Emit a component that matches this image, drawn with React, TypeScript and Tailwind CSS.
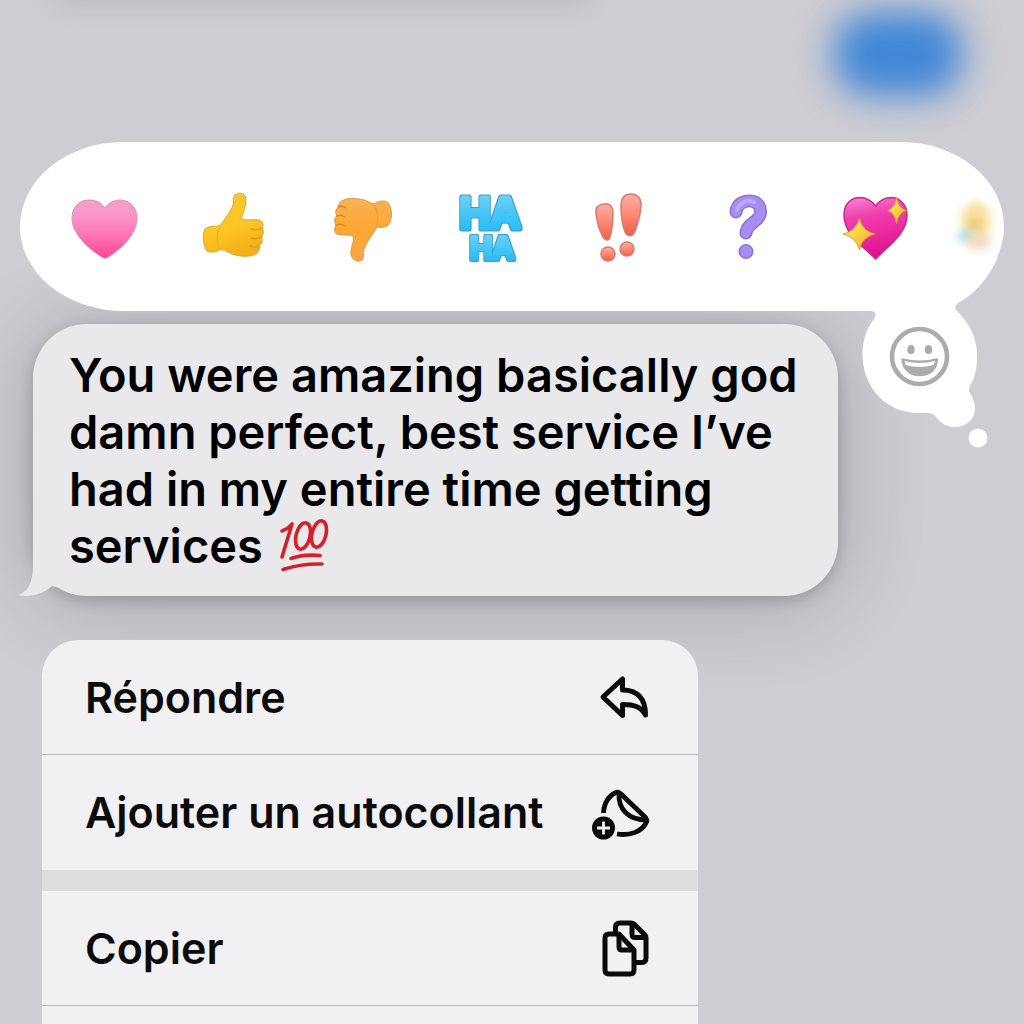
import { ReactNode } from "react";

function PinkHeart() {
  return (
    <svg viewBox="0 0 72 72" className="size-full" aria-hidden="true">
      <defs>
        <linearGradient id="pink" x1="0" y1="0" x2="0" y2="1">
          <stop offset="0" stopColor="#f3a0cb" />
          <stop offset="0.300" stopColor="#fc93c6" />
          <stop offset="0.600" stopColor="#fd76b4" />
          <stop offset="1" stopColor="#fb4496" />
        </linearGradient>
      </defs>
      <path
        d="M37 17C33 11 27 9 21 9C10 9 4 17 4 27C4 45 24 60 34.500 66.500Q37 68 39.500 66.500C50 60 69 45 69 27C69 17 62 9 52 9C46 9 40 12 37 17Z"
        fill="url(#pink)"
        stroke="#dd8fb8"
        strokeWidth="1"
      />
    </svg>
  );
}

function ThumbUp() {
  return (
    <svg viewBox="0 0 72 72" className="size-full" aria-hidden="true">
      <defs>
        <linearGradient id="thumbUp" x1="0" y1="0" x2="0.300" y2="1">
          <stop offset="0" stopColor="#fcc52f" />
          <stop offset="0.600" stopColor="#fec724" />
          <stop offset="1" stopColor="#f5b01a" />
        </linearGradient>
      </defs>
      <path
        d="M38 4C41 1 46 2 48 5C50 10 48 18 44 28C50 30 56 28 62 29C66 30 67 34 65 37C67 40 67 43 64.500 46C66 49 65 53 62.500 54.500C63 58 62 61 59 63C53 66 46 65.500 40 64.500C34 63.500 29 59 23.500 58.500C20 61 14 62 10 60C6 55 5 44 8 38C10 35 17 36 23 34.500C28 28 34 20 36 14C37 10 35 7 38 4Z"
        fill="url(#thumbUp)"
        stroke="#dfa52e"
        strokeWidth="1"
      />
      <g fill="none" stroke="#e0a01c" strokeWidth="1.500" strokeLinecap="round">
        <path d="M65 37Q60 40 54 38" />
        <path d="M64 46Q59 49 54 47" />
        <path d="M62 54.500Q58 57 53 55" />
        <path d="M23 36C19 43 19 52 23 58" stroke="#f0b322" />
      </g>
    </svg>
  );
}

function ThumbDown() {
  return (
    <svg viewBox="0 0 72 72" className="size-full" aria-hidden="true">
      <defs>
        <linearGradient id="thumbDown" x1="0" y1="0" x2="0" y2="1">
          <stop offset="0" stopColor="#f7b355" />
          <stop offset="0.500" stopColor="#ffa733" />
          <stop offset="1" stopColor="#f9a545" />
        </linearGradient>
      </defs>
      <path
        d="M48 13C42 10 38 8 33 8C28 7 23 7 19 9C15 10 13 13 14 16C10 18 10 22 12 25C9 27 9 31 11 34C9 37 9 42 12 43C17 45 23 43 28 45C30 50 25 57 26 64C27 69 34 72 37 69C40 66 37 63 39 58C42 50 48 43 52 36C57 37 62 36 64 33C68 26 67 15 62 11C57 8 52 12 48 13Z"
        fill="url(#thumbDown)"
        stroke="#d89a48"
        strokeWidth="1"
      />
      <g fill="none" stroke="#d98a26" strokeWidth="1.500" strokeLinecap="round">
        <path d="M13 16Q18 14 21 17" />
        <path d="M12 25Q16 23 20 26" />
        <path d="M11 34Q16 32 20 35" />
        <path d="M49 14C53 20 54 29 51 36" stroke="#ee9f36" />
      </g>
    </svg>
  );
}

function Haha() {
  return (
    <svg viewBox="0 0 72 72" className="size-full overflow-visible font-[Inter,sans-serif] font-semibold" aria-hidden="true">
      <defs>
        <linearGradient id="haha" x1="0" y1="0" x2="0" y2="1">
          <stop offset="0" stopColor="#7dd4f8" />
          <stop offset="0.600" stopColor="#3ec3f8" />
          <stop offset="1" stopColor="#22b5f2" />
        </linearGradient>
        <filter id="hahaEdge" x="-10%" y="-10%" width="120%" height="120%">
          <feMorphology in="SourceAlpha" operator="dilate" radius="1" result="grown" />
          <feFlood floodColor="#3a9fd0" />
          <feComposite in2="grown" operator="in" result="edge" />
          <feMerge>
            <feMergeNode in="edge" />
            <feMergeNode in="SourceGraphic" />
          </feMerge>
        </filter>
      </defs>
      <g textAnchor="middle" strokeLinejoin="round" fill="url(#haha)" stroke="url(#haha)" filter="url(#hahaEdge)">
        <text x="36" y="37" fontSize="41" strokeWidth="5">HA</text>
        <text x="38" y="68" fontSize="30" strokeWidth="4">HA</text>
      </g>
    </svg>
  );
}

function Exclamations() {
  return (
    <svg viewBox="0 0 72 72" className="size-full" aria-hidden="true">
      <defs>
        <linearGradient id="coral" x1="0" y1="0" x2="0" y2="1">
          <stop offset="0" stopColor="#f9b0a4" />
          <stop offset="0.500" stopColor="#fd8875" />
          <stop offset="1" stopColor="#f15f4a" />
        </linearGradient>
      </defs>
      <g fill="url(#coral)" stroke="#d87a6c" strokeWidth="1.500">
        <path d="M14 23C13 16 17 13 22 13C28 12 31 16 31 21C31 30 30 39 28 46C27 50 23 50 21 46C17 39 15 31 14 23Z" />
        <path d="M39 15C39 7 43 3 49 3C55 3 59 7 59 13C59 22 56 32 53 40C51 46 45 46 43 41C40 33 39 24 39 15Z" />
        <circle cx="26" cy="63" r="7" />
        <circle cx="45" cy="58" r="7" />
      </g>
    </svg>
  );
}

function Question() {
  return (
    <svg viewBox="0 0 72 72" className="size-full" aria-hidden="true">
      <g fill="none" strokeLinecap="round" strokeLinejoin="round">
        <path d="M25 21C26 12 33 10 39 10C47 10 51 17 49 24C47 31 36 32 35 42" stroke="#8a76c8" strokeWidth="13" />
        <path d="M25 21C26 12 33 10 39 10C47 10 51 17 49 24C47 31 36 32 35 42" stroke="#a88df2" strokeWidth="10" />
        <path d="M26 19C28 11 37 8 43 11" stroke="#bca8f8" strokeWidth="4" />
      </g>
      <circle cx="35" cy="60.500" r="6.700" fill="#a88df2" stroke="#8a76c8" strokeWidth="1.500" />
    </svg>
  );
}

function SparklingHeart() {
  return (
    <svg viewBox="0 0 72 72" className="size-full" aria-hidden="true">
      <defs>
        <linearGradient id="magenta" x1="0" y1="0" x2="0.200" y2="1">
          <stop offset="0" stopColor="#f887d2" />
          <stop offset="0.350" stopColor="#f03fb0" />
          <stop offset="1" stopColor="#e2118d" />
        </linearGradient>
        <linearGradient id="gold" x1="0" y1="0" x2="1" y2="1">
          <stop offset="0.300" stopColor="#fde14f" />
          <stop offset="1" stopColor="#f0a32a" />
        </linearGradient>
      </defs>
      <path
        d="M36.600 15C32 9 27 6.500 21 6.500C11 6.500 5 14 5 24C5 44 24 55 36.600 68C49 55 68 43 68 24C68 14 61 6.500 52 6.500C46 6.500 41 9 36.600 15Z"
        fill="url(#magenta)"
        stroke="#c42a90"
        strokeWidth="1.500"
      />
      <g fill="url(#gold)" stroke="#d98f34" strokeWidth="0.800">
        <path d="M20.500 27Q23 40 36.500 43Q23 46 20.500 59Q17 46 4 43Q17 40 20.500 27Z" />
        <path d="M57.500 6Q59 17 67.500 19.500Q59 22 57.500 33Q56 22 48.500 19.500Q56 17 57.500 6Z" />
      </g>
    </svg>
  );
}

function FadingFace() {
  return (
    <svg viewBox="0 0 28 72" className="size-full overflow-visible blur-[4px]" aria-hidden="true">
      <ellipse cx="8" cy="29" rx="15" ry="18" fill="#f9e2a0" />
      <ellipse cx="-2" cy="45" rx="9" ry="7" fill="#b0e0ef" />
      <ellipse cx="10" cy="50" rx="13" ry="9" fill="#f3dac2" />
      <ellipse cx="7" cy="33" rx="8" ry="5" fill="#e8c870" />
    </svg>
  );
}

function Hundred() {
  return (
    <svg
      viewBox="0 0 50 54"
      className="ml-1 inline-block h-[54px] w-[50px] align-[-9px]"
      fill="none"
      stroke="#d3202a"
      strokeWidth="3.600"
      strokeLinecap="round"
      strokeLinejoin="round"
      role="img"
      aria-label="100"
    >
      <path d="M3 13Q9 11 13 6L3 39" />
      <ellipse cx="24" cy="18" rx="7" ry="13.500" transform="rotate(14 24 18)" />
      <ellipse cx="40" cy="16" rx="7" ry="13.500" transform="rotate(14 40 16)" />
      <path d="M12 40.500Q25 36 41 37.500" />
      <path d="M4 51.500Q22 45.500 43 46" />
    </svg>
  );
}

function ReplyIcon() {
  return (
    <svg viewBox="0 0 64 64" className="size-16" fill="none" stroke="#0b0b0c" strokeWidth="5" strokeLinejoin="round" aria-hidden="true">
      <path d="M29.500 14V25C45 25 52.500 34 52.500 50C48 42 42 39.500 29.500 39.500V50.500L10 32Z" />
    </svg>
  );
}

function StickerIcon() {
  return (
    <svg viewBox="0 0 64 64" className="size-16 overflow-visible" fill="none" stroke="#0b0b0c" strokeWidth="4.800" strokeLinejoin="round" aria-hidden="true">
      <path d="M10.500 32C11 21 17 14 22 12Q25 10 28 13L52 36Q55 39 53 42C48 51 37 55 24 53" />
      <path d="M26 12C25 28 35 39 54 39" />
      <circle cx="10.500" cy="47" r="11.500" fill="#0b0b0c" stroke="none" />
      <path d="M10.500 40.500V53.500M4 47H17" stroke="#f1f1f3" strokeWidth="2.800" />
    </svg>
  );
}

function CopyIcon() {
  return (
    <svg viewBox="0 0 64 64" className="size-16" fill="none" stroke="#0b0b0c" strokeWidth="5" strokeLinejoin="round" aria-hidden="true">
      <path d="M22.500 17V11Q22.500 7 27 7H38Q40 7 41 8L52 19Q53 20.500 53 22V42Q53 46.500 49 46.500H43" />
      <path d="M39 8V18Q39 21.500 42 21.500H53" />
      <path d="M16 18H26L41 34V54Q41 58 37 58H16Q12 58 12 54V22Q12 18 16 18Z" />
      <path d="M26 18V31Q26 34 29 34H41" />
    </svg>
  );
}

const reactions = [
  { name: "Cœur", icon: <PinkHeart /> },
  { name: "Pouce en haut", icon: <ThumbUp /> },
  { name: "Pouce en bas", icon: <ThumbDown /> },
  { name: "Haha", icon: <Haha /> },
  { name: "Exclamation", icon: <Exclamations /> },
  { name: "Interrogation", icon: <Question /> },
  { name: "Cœur étincelant", icon: <SparklingHeart /> },
];

function ReactionBar() {
  return (
    <div className="relative z-10 mx-5 flex h-[169px] items-center justify-between rounded-[104px/85px] bg-white pr-2 pl-12">
      {reactions.map((r) => (
        <button key={r.name} aria-label={r.name} className="size-[72px] shrink-0">
          {r.icon}
        </button>
      ))}
      <button aria-label="Plus de réactions" className="h-[72px] w-7 shrink-0">
        <FadingFace />
      </button>

      {/* thought bubble tail with the emoji picker */}
      <button aria-label="Choisir un emoji" className="absolute top-[148px] right-0 h-40 w-[154px]">
        <svg viewBox="850 290 154 160" className="size-full overflow-visible" aria-hidden="true">
          <path
            d="M860 300V311H872Q878 312 874 319C866 329 862 342 862.500 357C864 390 888 413 919 413H928Q933 413 937 418C943 426 952 429 962 426C973 422 977 412 974 402Q973 397 970 393Q968 390 970 386C975 378 977.500 367 977 355C977 338 970 324 957 311Q953 307 958 303C973 295 988 280 998 257H940Z"
            fill="#fff"
          />
          <circle cx="978" cy="438" r="9.500" fill="#fff" />
          <circle cx="919.500" cy="356.500" r="27.500" fill="none" stroke="#acacac" strokeWidth="4.600" />
          <ellipse cx="911" cy="349.500" rx="3.700" ry="4.500" fill="#acacac" />
          <ellipse cx="928.500" cy="349.500" rx="3.700" ry="4.500" fill="#acacac" />
          <path d="M902.500 359.500Q919.500 364 937 359.500C936 370 929 375 919.500 375C910 375 903.500 369 902.500 359.500Z" fill="#acacac" stroke="#acacac" strokeWidth="2.500" strokeLinejoin="round" />
          <path d="M904.500 361Q919.500 365 935 361L933.500 365Q919.500 369 905.500 365Z" fill="#fff" />
        </svg>
      </button>
    </div>
  );
}

function MenuItem({ label, icon, last }: { label: string; icon: ReactNode; last?: boolean }) {
  return (
    <button
      className={
        "flex h-[115px] w-full items-center justify-between bg-[#f1f1f3] pr-[41px] pl-[43px] text-left text-[43px] font-semibold text-[#0b0b0c]" +
        (last ? "" : " border-b border-[#b9b9bc]")
      }
    >
      <span>{label}</span>
      {icon}
    </button>
  );
}

export default function App() {
  return (
    <div className="relative h-screen overflow-hidden bg-[#cecdd3] pt-[142px] font-[Inter,sans-serif]">
      {/* blurred conversation behind the overlay */}
      <div className="absolute top-3 right-[62px] h-[84px] w-[128px] rounded-[36px] bg-[#4087d6] blur-[18px]" />
      <div className="absolute -top-4 left-14 h-4 w-[530px] bg-[#b0b0b6] blur-[12px]" />

      <ReactionBar />

      <div className="relative mt-[13px] ml-[33px] min-h-[272px] w-[805px] rounded-[54px] bg-[#e9e9eb] px-9 pt-[22px] shadow-[0_4px_16px_rgba(0,0,0,0.18),0_6px_90px_rgba(0,0,0,0.2)]">
        <svg viewBox="0 0 60 60" className="absolute bottom-0 -left-4 size-[60px]" aria-hidden="true">
          <path d="M16 0V30C16 46 11 56 1 59C13 62 26 58 35 50L58 56V0Z" fill="#e9e9eb" />
        </svg>
        <p className="relative text-[47px] leading-[57px] font-semibold text-black">
          You were amazing basically god damn perfect, best service I’ve had in my entire time getting services <Hundred />
        </p>
      </div>

      <div className="relative mt-11 ml-[42px] w-[656px] overflow-hidden rounded-t-[36px]">
        <MenuItem label="Répondre" icon={<ReplyIcon />} />
        <MenuItem label="Ajouter un autocollant" icon={<StickerIcon />} last />
        <div className="h-[21px] bg-[#dddde0]" />
        <MenuItem label="Copier" icon={<CopyIcon />} />
        <div className="h-[115px] bg-[#f1f1f3]" />
      </div>
    </div>
  );
}
